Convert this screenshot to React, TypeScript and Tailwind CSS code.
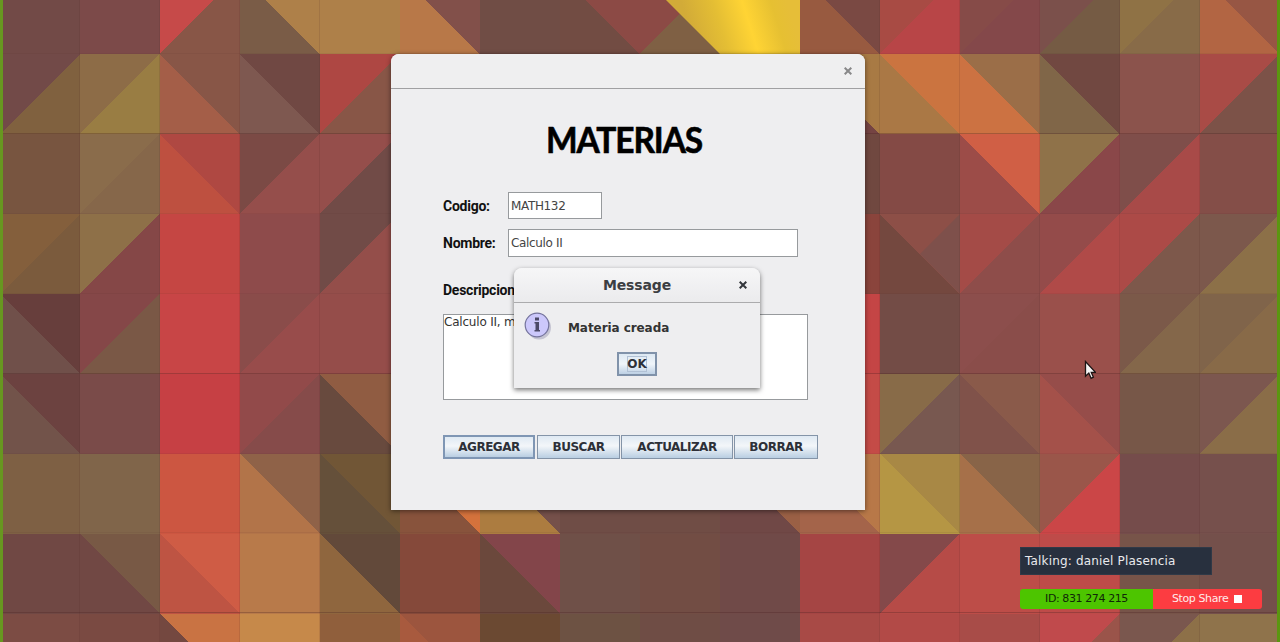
import React from 'react';

type Cell = string;

// Each cell is "colour", "/ upperLeft lowerRight" or "\ upperRight lowerLeft".
const ROWS: Cell[][] = [
  ['724a47', '7c4a49', '/ c64a49 885647', '\\ ae8049 7a5c47', 'ae8049', '\\ 82504a b87848', '704d45', '\\ 8c4a45 724c43', '/ 8c4a45 7f6044', 'e3be33', '\\ 7a4943 985a40', '/ a84b44 b84547', '/ 864b48 84484a', '/ 7b504b 755b44', '/ 8f7245 886b48', '\\ 975644 b26543'],
  ['/ 724a48 80613f', '/ 8d6c47 997d43', '\\ 885647 a45e48', '\\ 704843 7e5850', '/ ae4743 885647', '704843', '704843', '704843', '704843', '704843', '\\ a87a44 754443', '\\ cb7440 aa7845', '\\ 9b6e48 cc7242', '\\ 714841 806648', '8b534c', '/ a94b46 7c5248'],
  ['785540', '/ 8a6c4b 86674a', '\\ af4842 be5040', '/ 7b4a45 954e4b', '/ 954e4b 714b47', '704843', '704843', '704843', '704843', '704843', '704840', '844a45', '\\ d05f45 9c4c48', '/ 8f7249 8a4749', '/ 7f4e4a a84a48', '844e48'],
  ['/ 845f3c 7b5b3d', '/ 8e7048 854747', 'c54643', '8e4b4b', '/ 714b47 944e4a', '704843', '704843', '704843', '704843', '704843', '8a443c', '\\ 8d4f47 74483f', '/ a44b47 8e4d4a', '/ 944b4a b04a48', '/ ac4a47 7d584b', '/ 7c584c 8c7048'],
  ['\\ 673e3c 70504a', '/ 854748 7a5846', 'c84546', '/ 8a4c4a 984c4b', '954d4a', '704843', '704843', '704843', '704843', '704843', 'c44545', '734c46', '/ 8c4e4c 8a4d4a', '9a504b', '/ 7b5949 84674a', '/ 80644a 886a48'],
  ['\\ 6c4240 72534a', '7a4b49', 'c64044', '/ 924a4a 864b4a', '\\ 905c42 684a3e', '704843', '704843', '704843', '704843', '704843', 'c44b47', '/ 886b48 785850', '\\ 8a5a4a 80524a', '\\ 964d4a a4514a', '775748', '/ 7c574f 8a6d48'],
  ['7e6044', '80654a', 'cc5641', '\\ 8f6248 b27449', '\\ 715636 65503a', '\\ d4723c 88533c', '\\ 75504a ac7c40', '6f4d46', '704d45', '\\ 9a6045 704846', '\\ b87848 a4644a', '\\ a88845 b59644', '\\ 886448 a67049', '/ 9a564a cb4647', '754c4b', '76504c'],
  ['704844', '\\ 785945 714844', '\\ cf5c45 be5443', 'b87a4a', '\\ 62493a 8f663e', '85493a', '\\ 83454a 6b483c', '6f5048', '724d44', '704a48', 'a54544', '/ 84494a b64b47', 'bd4d48', 'be4b49', '775449', '74504b'],
  ['7c4c44', '7a4a42', '\\ c97343 744840', 'c6894a', '905f3c', '\\ 9c553e a85a3e', '6b4932', '6d5243', '6f4d45', '6f4b49', 'a84a46', 'b24a47', 'a84c48', '/ c04a4c 9a544a', '/ 7a574e 8d7048', '8f734b'],
];

function Tile({ cell, x, y }: { cell: Cell; x: number; y: number }) {
  const parts = cell.split(' ');
  const r = x + 80;
  const b = y + 80;
  if (parts.length === 1) return <rect x={x} y={y} width={80} height={80} fill={'#' + parts[0]} />;
  const tri = parts[0] === '/' ? `${x},${b} ${r},${y} ${r},${b}` : `${x},${y} ${r},${b} ${x},${b}`;
  return (
    <>
      <rect x={x} y={y} width={80} height={80} fill={'#' + parts[1]} />
      <polygon points={tri} fill={'#' + parts[2]} />
    </>
  );
}

function Wallpaper() {
  return (
    <svg className="absolute inset-0 block h-[642px] w-[1280px]" viewBox="0 0 1280 642" aria-hidden="true">
      <defs>
        <linearGradient id="gold" gradientUnits="userSpaceOnUse" x1="690" y1="30" x2="786" y2="0">
          <stop offset="0" stopColor="#d2ab38" />
          <stop offset="0.3" stopColor="#e4be34" />
          <stop offset="0.58" stopColor="#ffd434" />
          <stop offset="0.85" stopColor="#e6c032" />
          <stop offset="1" stopColor="#e6be38" />
        </linearGradient>
      </defs>
      <g shapeRendering="crispEdges">
        {ROWS.map((row, j) => row.map((cell, i) => <Tile key={`${j}-${i}`} cell={cell} x={i * 80 - (i ? 0.5 : 0)} y={j * 80 - 26 - (j > 5 ? 0.5 : 0)} />))}
      </g>
      <polygon points="640,-26 800,-26 800,54 720,54" fill="url(#gold)" />
      <polygon points="960,214 960,294 920,254" fill="#7e504b" />
      {[80, 160, 240, 320, 880, 960, 1040, 1120, 1200].map((x) => (
        <path key={x} d={`M${x - 0.5} 0V642`} stroke="#4a2020" strokeOpacity="0.12" />
      ))}
      {[54, 134, 214, 294, 374, 454, 533, 613].map((y) => (
        <path key={y} d={`M0 ${y - 0.5}H1280`} stroke="#4a2020" strokeOpacity={y === 134 || y === 374 || y === 613 ? 0.3 : 0.08} />
      ))}
      <rect width="3" height="642" fill="#679720" />
      <rect x="1277" width="3" height="642" fill="#5b9610" />
    </svg>
  );
}

function CloseMark({ className }: { className: string }) {
  return (
    <svg className={className} viewBox="0 0 8 8" fill="none" stroke="currentColor" strokeWidth="2" aria-hidden="true">
      <path d="M0.7 0.7L7.3 7.3M7.3 0.7L0.7 7.3" />
    </svg>
  );
}

function ActionButton({ label, className, focused = false }: { label: string; className: string; focused?: boolean }) {
  return (
    <button
      className={
        'flex h-6 items-center justify-center bg-linear-to-b from-[#dfe9f3] via-[#f3f6f9] via-45% to-[#b9cee2] text-[12px] font-bold tracking-[-0.5px] text-[#2d3038] ' +
        (focused ? 'border-2 border-[#7f96b4] ' : 'border border-[#8494a8] ') +
        className
      }
    >
      {label}
    </button>
  );
}

function MateriasWindow() {
  return (
    <section className="absolute top-[54px] left-[391px] flex h-[456px] w-[474px] flex-col rounded-t-lg bg-[#eeeef0] shadow-[0_1px_5px_rgba(0,0,0,0.5)]">
      <header className="flex h-[35px] shrink-0 items-center justify-end rounded-t-lg border-b border-[#a0a0a2] bg-[#efeff0] pr-[13px]">
        <CloseMark className="size-2 text-[#888889]" />
      </header>
      <h1 className="mt-[30px] ml-[155px] h-10 origin-left scale-x-[0.93] font-['Lato'] text-[36px] leading-10 font-bold tracking-[-1.2px] whitespace-nowrap text-black [-webkit-text-stroke:0.6px_black]">
        MATERIAS
      </h1>
      <form className="flex flex-col pl-[52px] font-['Roboto'] text-[14px] font-bold tracking-[-0.25px] text-[#111]">
        <div className="mt-[33px] flex h-[27px] items-center">
          <label className="w-[65px] pt-px">Codigo:</label>
          <div className="flex h-[27px] w-[94px] items-center border border-[#979a9d] bg-white pl-[2px] font-['DejaVu_Sans'] text-[12px] font-normal tracking-[-0.35px] text-[#444]">MATH132</div>
        </div>
        <div className="mt-[10px] flex h-[28px] items-center">
          <label className="w-[65px]">Nombre:</label>
          <div className="flex h-[28px] w-[290px] items-center border border-[#979a9d] bg-white pl-[2px] font-['DejaVu_Sans'] text-[12px] font-normal tracking-[-0.35px] text-[#444]">Calculo II</div>
        </div>
        <label className="mt-[23px] h-5 leading-5">Descripcion:</label>
        <div className="mt-[14px] h-[86px] w-[365px] border border-[#979a9d] bg-white font-['DejaVu_Sans'] text-[12px] leading-[15px] font-normal tracking-[-0.2px] text-[#333]">
          Calculo II, m
        </div>
      </form>
      <div className="mt-[35px] flex pl-[52px] font-['DejaVu_Sans']">
        <ActionButton label="AGREGAR" className="w-[92px]" focused />
        <ActionButton label="BUSCAR" className="ml-[2px] w-[83px]" />
        <ActionButton label="ACTUALIZAR" className="ml-[1px] w-[112px]" />
        <ActionButton label="BORRAR" className="ml-[1px] w-[84px]" />
      </div>
    </section>
  );
}

function InfoIcon() {
  return (
    <svg className="size-7" viewBox="0 0 28 28" aria-hidden="true">
      <circle cx="15" cy="15.5" r="12" fill="#b4b2c4" opacity="0.7" />
      <circle cx="13" cy="13" r="11.8" fill="#ccc8fb" stroke="#74739c" strokeWidth="1.2" />
      <path d="M11 5.5h4v3h-4zM10.5 10h4.5v8h1v1.5h-5.5V18h1v-6.5h-1z" fill="#4c4a68" />
    </svg>
  );
}

function MessageDialog() {
  return (
    <section className="absolute top-[268px] left-[514px] flex h-[120px] w-[246px] flex-col rounded-t-lg bg-[#eeeef0] font-['DejaVu_Sans'] shadow-[0_2px_5px_rgba(0,0,0,0.55)]">
      <header className="grid h-[35px] shrink-0 grid-cols-[36px_1fr_36px] items-center rounded-t-lg border-b border-[#ababad] bg-linear-to-b from-[#f6f6f7] to-[#ebebed] text-[#33363b]">
        <h2 className="col-start-2 text-center text-[14px] leading-5 font-bold tracking-[-0.15px] text-[#3c3e42]">Message</h2>
        <CloseMark className="ml-[15px] size-2" />
      </header>
      <div className="flex h-[49px] pt-[9px] pl-[10px]">
        <InfoIcon />
        <p className="mt-[7px] ml-4 text-[12px] leading-[18px] font-bold tracking-[-0.07px] text-[#333]">Materia creada</p>
      </div>
      <button className="ml-[103px] flex h-6 w-10 items-center justify-center border-2 border-[#8092aa] bg-linear-to-b from-[#dde8f2] via-[#f0f5fa] to-[#bdd0e4] text-[12px] font-bold text-[#2d3038]">
        <span className="flex h-[16px] w-5 items-center justify-center border border-[#b1c1d5]">OK</span>
      </button>
    </section>
  );
}

function SharingStatus() {
  return (
    <aside className="absolute top-[547px] left-[1020px] flex w-[242px] flex-col font-['DejaVu_Sans']">
      <div className="flex h-[28px] w-[192px] items-center border border-[#303947] bg-[#28303e] pl-1 text-[12px] tracking-[0.17px] text-[#e8eaed]">Talking: daniel Plasencia</div>
      <div className="mt-[14px] flex h-5 overflow-hidden rounded-[3px] text-[11px] tracking-[-0.4px]">
        <div className="flex w-[133px] items-center justify-center bg-[#4dc500] text-[#102808]">ID: 831 274 215</div>
        <div className="flex flex-1 items-center bg-[#fc3c41] pl-[19px] text-[#ffeaea]">
          Stop Share
          <span className="ml-1.5 size-2 bg-white" />
        </div>
      </div>
    </aside>
  );
}

function Cursor() {
  return (
    <svg className="absolute top-[360px] left-[1084px] h-5 w-3" viewBox="0 0 12 20" aria-hidden="true">
      <path d="M1.5 1.5V16.2L4.8 13L7.1 18.3L9.4 17.2L7.3 12.4H11.5Z" fill="#f5f5f5" stroke="#1c1414" strokeWidth="1.3" />
    </svg>
  );
}

export default function App() {
  return (
    <main className="relative h-[642px] w-[1280px] overflow-hidden bg-[#704843]">
      <Wallpaper />
      <MateriasWindow />
      <MessageDialog />
      <SharingStatus />
      <Cursor />
    </main>
  );
}
